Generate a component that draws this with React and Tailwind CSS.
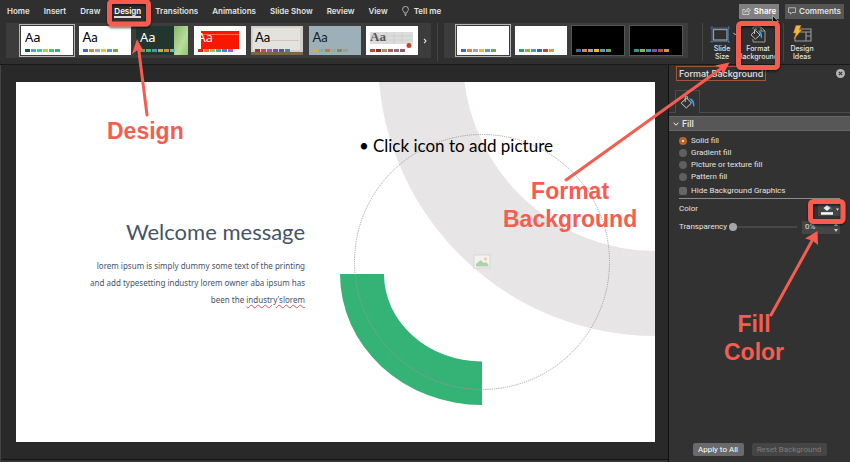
import React from "react";

const tabs = ["Home", "Insert", "Draw", "Design", "Transitions", "Animations", "Slide Show", "Review", "View"];

const office = ["#4468b8", "#de8244", "#a5a5a5", "#f2bd1d", "#5b97d0", "#6fa84c"];

const themes = [
  { name: "Current theme", swatches: ["#17564c", "#3fb0c8", "#1edb8c", "#b7d334", "#25d86c", "#33b66c"], bg: "bg-white", text: "text-black font-['Noto_Sans']", selected: true },
  { name: "Office Theme", swatches: office, bg: "bg-white", text: "text-black font-[Lato]" },
  { name: "Ion", swatches: ["#5fa040", "#45b08a", "#3c9fb8", "#c9ae38", "#d98a2f", "#6cb6b0"], bg: "bg-[#22362f]", text: "text-white font-['Noto_Sans']", art: "ion" },
  { name: "Atlas", swatches: ["#e02020", "#f07030", "#9bc04a", "#38b0a0", "#3b86d0", "#b054d8"], bg: "bg-white", text: "text-white font-['Open_Sans']", art: "atlas" },
  { name: "Gallery", swatches: ["#a82848", "#d83c78", "#a84cc0", "#6850b0", "#4a58a0", "#4f8098"], bg: "bg-[#d3d0ca]", text: "text-black font-[Lato]", art: "gallery" },
  { name: "Parcel", swatches: ["#e5a73c", "#94a5aa", "#cf7040", "#a3a688", "#86866a", "#9b9f86"], bg: "bg-[#9db0b8]", text: "text-[#16201f] font-[Lato]" },
  { name: "Wood Type", swatches: ["#c44a24", "#8c2f28", "#a39468", "#a0605c", "#8a7078", "#8c5c6c"], bg: "bg-white", text: "text-[#555] font-['Liberation_Serif'] font-bold", art: "wood" },
];

const variants = [
  { name: "Variant 1", swatches: office, bg: "bg-white", selected: true },
  { name: "Variant 2", swatches: ["#2b9a80", "#86b840", "#36a3c8", "#2868a8", "#b8482c", "#e8992c"], bg: "bg-white" },
  { name: "Variant 3", swatches: office, bg: "bg-black" },
  { name: "Variant 4", swatches: ["#2b9a80", "#86b840", "#3a94b8", "#7450b8", "#c84a2c", "#d8903c"], bg: "bg-black" },
];

function ThumbArt({ kind }) {
  return (
    <svg className="absolute inset-0 h-full w-full" viewBox="0 0 52 29" preserveAspectRatio="none" aria-hidden="true">
      {kind === "ion" && (
        <>
          <defs>
            <linearGradient id="leaf" x1="0" y1="0" x2="1" y2="1">
              <stop offset="0" stopColor="#86b86a" />
              <stop offset="0.6" stopColor="#b9dc9e" />
              <stop offset="1" stopColor="#8cc66c" />
            </linearGradient>
          </defs>
          <rect x="38" width="14" height="29" fill="url(#leaf)" />
        </>
      )}
      {kind === "atlas" && (
        <>
          <rect x="7" y="5" width="38" height="18" fill="#f81800" />
          <path d="M7 8.500H45" stroke="#fb7a68" strokeWidth="0.8" />
        </>
      )}
      {kind === "gallery" && (
        <>
          <rect x="2" y="2" width="47" height="22" fill="#e4e2dd" />
          <path d="M18 14.500H48" stroke="#c9b8b6" strokeWidth="0.7" />
          <rect y="26" width="52" height="3" fill="#7c6544" />
        </>
      )}
      {kind === "wood" && (
        <>
          <rect x="4" y="6" width="43" height="12" fill="#dcdcdc" />
          <path d="M4 10H47M4 14H47M12 6V18M20 6V18M28 6V18M36 6V18" stroke="#cbcbcb" strokeWidth="0.6" />
          <circle cx="43" cy="19.500" r="2.500" fill="#c2442a" />
        </>
      )}
    </svg>
  );
}

function Thumb({ item }) {
  return (
    <button
      type="button"
      aria-label={item.name}
      className={`relative flex h-[29px] w-[52px] shrink-0 flex-col justify-end pb-[3px] pl-[4px] ${item.bg} ${
        item.selected ? "outline outline-1 outline-offset-1 outline-[#b4b4b4]" : item.bg === "bg-black" ? "outline outline-1 outline-[#565656]" : ""
      }`}
    >
      {item.art && <ThumbArt kind={item.art} />}
      {item.text && <span className={`relative flex-1 pt-[3px] text-left text-[13px] leading-[16px] ${item.text}`}>Aa</span>}
      <span className="relative flex gap-px">
        {item.swatches.map((c, i) => (
          <i key={i} className="h-[3px] w-[5px]" style={{ backgroundColor: c }} />
        ))}
      </span>
    </button>
  );
}

function Bucket({ className }) {
  return (
    <svg className={className} viewBox="0 0 16 14" fill="none" aria-hidden="true">
      <path d="M6.500 3 11.500 8 6.300 13 1.200 8Z" stroke="#d0d0d0" strokeWidth="1" strokeLinejoin="round" />
      <path d="M5.200 7V2.200C5.200.8 7.600.8 7.600 2.200V4" stroke="#d0d0d0" strokeWidth="0.9" />
      <path d="M9 3.500C12.500 3 14.800 5.500 14.400 12 13 12 12.800 9.500 12.400 7.500Z" fill="#3b9be0" />
    </svg>
  );
}

function Ribbon() {
  return (
    <div className="flex h-[43px] items-start border-b border-[#191919] px-[6px] pt-px">
      <div className="flex h-[35px] w-[425px] shrink-0 items-center bg-[#3c3c3c] pl-[15px]">
        <div className="flex w-[397px] justify-between">
          {themes.map((t) => <Thumb key={t.name} item={t} />)}
        </div>
        <button type="button" aria-label="More themes" className="flex flex-1 justify-center">
          <svg className="h-[6px] w-[4px]" viewBox="0 0 4 6" fill="none"><path d="M1 .8 3 3 1 5.200" stroke="#e8e8e8" strokeWidth="1.100" /></svg>
        </button>
      </div>
      <div className="mx-[6px] h-[38px] w-px bg-[#454545]" />
      <div className="flex h-[35px] w-[244px] shrink-0 items-center bg-[#3c3c3c] pl-[13px]">
        <div className="flex w-[225px] justify-between">
          {variants.map((t) => <Thumb key={t.name} item={t} />)}
        </div>
      </div>
      <div className="ml-[14px] h-[38px] w-px bg-[#454545]" />
      <button type="button" className="flex w-[38px] shrink-0 flex-col items-center text-[7px] leading-[8px] font-medium">
        <span className="flex h-[22px] items-center gap-[3px] pl-[4px]">
          <svg className="h-[17px] w-[20px] shrink-0" viewBox="0 0 20 17" fill="none" aria-hidden="true">
            <path d="M2 0V17M18.500 0V17M0 2H20M0 15.500H20" stroke="#3d6d9c" strokeWidth="0.9" />
            <rect x="3.500" y="3.500" width="13.500" height="10.500" stroke="#9a9a9a" strokeWidth="1.300" />
          </svg>
          <svg className="h-[4px] w-[5px] shrink-0" viewBox="0 0 5 4" fill="none"><path d="M.5.8 2.500 3 4.500.8" stroke="#ddd" /></svg>
        </span>
        Slide<br />Size
      </button>
      <button type="button" className="flex w-[34px] shrink-0 flex-col items-center text-[7px] leading-[8px] font-medium">
        <span className="flex h-[22px] items-center">
          <svg className="h-[17px] w-[18px]" viewBox="0 0 18 17" fill="none" aria-hidden="true">
            <path d="M4 1H12L16 5V16H4V13M4 3V1M12 1V5H16" stroke="#a5a5a5" strokeWidth="0.9" />
            <path d="M6.500 4.500 11 9 6.500 13 2 8.800ZM5.500 8V3.800C5.500 2.600 7.500 2.600 7.500 3.800" stroke="#ccc" strokeWidth="0.9" />
            <path d="M9 4.500C12.500 4.500 13.500 8 13 12.500 11.600 12.500 11.400 10 11 8.500Z" fill="#3b9be0" />
          </svg>
        </span>
        Format<br />Background
      </button>
      <div className="ml-[8px] h-[38px] w-px bg-[#454545]" />
      <button type="button" className="flex w-[36px] shrink-0 flex-col items-center text-[7px] leading-[8px] font-medium">
        <span className="flex h-[22px] items-center">
          <svg className="h-[18px] w-[20px]" viewBox="0 0 20 18" fill="none" aria-hidden="true">
            <path d="M7 4H19V16H3V12M8 7H19M14 7V16M14 11H19" stroke="#9c9c9c" strokeWidth="1.100" />
            <path d="M4 .5H9L7 5H9.500L2 14 4 8H1.500Z" fill="#f6b73c" stroke="#c98516" strokeWidth="0.5" />
          </svg>
        </span>
        Design<br />Ideas
      </button>
    </div>
  );
}

function Slide() {
  return (
    <section aria-label="Slide" className="relative aspect-[639/360] w-full overflow-hidden bg-white">
      <svg className="absolute inset-0 h-full w-full" viewBox="0 0 639 360" aria-hidden="true">
        <circle cx="640" cy="-24" r="235.500" fill="none" stroke="#e7e5e6" strokeWidth="85" />
        <path d="M324 192H368A98 87.500 0 0 0 466 279.500V323A142 131 0 0 1 324 192Z" fill="#35b276" />
        <circle cx="466" cy="180" r="127.500" fill="none" stroke="#9b9b9b" strokeWidth="0.9" strokeDasharray="1.200 1" />
        <g opacity="0.8">
          <rect x="458" y="173" width="16" height="13" fill="#f7f7f5" stroke="#cfcfcf" strokeWidth="0.9" />
          <circle cx="469.500" cy="177" r="1.800" fill="#f4cf8c" />
          <path d="M460 184.500V182L464.500 178 468 181 470 180 472.500 182.500V184.500Z" fill="#a3cda0" />
        </g>
      </svg>
      <ul className="absolute top-[51px] left-[343px] font-[Lato]">
        <li className="flex gap-[4px] text-[17px] leading-[26px] whitespace-nowrap text-black"><span aria-hidden="true">•</span>Click icon to add picture</li>
      </ul>
      <h1 className="absolute top-[134px] right-[350px] font-[Lato] text-[22px] leading-[32px] whitespace-nowrap text-[#44546a]">Welcome message</h1>
      <p className="absolute top-[175px] right-[350px] text-right font-['Noto_Sans'] text-[8px] leading-[17px] whitespace-nowrap text-[#44546a]">
        lorem ipsum is simply dummy some text of the printing<br />
        and add typesetting industry lorem owner aba ipsum has<br />
        been the <span className="underline decoration-[#e0525c] decoration-wavy decoration-1 underline-offset-1">industry'slorem</span>
      </p>
    </section>
  );
}

const fills = ["Solid fill", "Gradient fill", "Picture or texture fill", "Pattern fill"];

function FormatPane() {
  return (
    <aside className="flex w-[182px] shrink-0 flex-col border-l border-[#111] bg-[#323232] font-[Roboto,sans-serif] text-[8px] leading-[10px]">
      <div className="flex items-center justify-between pt-px pr-[5px] pl-[7px]">
        <h2 className="border border-[#a2573a] px-[2px] font-[Inter,sans-serif] text-[9px] leading-[13px] font-medium">Format Background</h2>
        <button type="button" aria-label="Close pane">
          <svg className="h-[9px] w-[9px]" viewBox="0 0 9 9"><circle cx="4.500" cy="4.500" r="4.500" fill="#b5b5b5" /><path d="M2.800 2.800 6.200 6.200M6.200 2.800 2.800 6.200" stroke="#323232" strokeWidth="1.100" /></svg>
        </button>
      </div>
      <div className="mt-[9px] flex items-end">
        <div className="w-[6px] border-b border-[#4b4b4b]" />
        <button type="button" aria-label="Fill" className="flex h-[23px] w-[25px] items-center justify-center border border-b-0 border-[#4b4b4b]">
          <Bucket className="h-[14px] w-[16px]" />
        </button>
        <div className="flex-1 border-b border-[#4b4b4b]" />
      </div>
      <button type="button" className="mt-[3px] flex h-[15px] items-center gap-[3px] border-y border-[#666] bg-[#575757] pl-[4px] text-[9px] font-medium">
        <svg className="h-[4px] w-[6px]" viewBox="0 0 6 4" fill="none"><path d="M.7.700 3 3.200 5.300.700" stroke="#eee" /></svg>
        Fill
      </button>
      <fieldset className="mt-[4px] px-[10px]">
        {fills.map((f, i) => (
          <label key={f} className="flex h-[12px] items-center gap-[4px]">
            <input
              type="radio"
              name="fill"
              defaultChecked={i === 0}
              className="h-[8px] w-[8px] appearance-none rounded-full bg-[#5f5f5f] checked:border-[3px] checked:border-[#bb6428] checked:bg-white"
            />
            {f}
          </label>
        ))}
      </fieldset>
      <div className="px-[10px]">
        <label className="flex h-[16px] items-center gap-[4px] border-b border-[#8c8c8c]">
          <input type="checkbox" className="h-[8px] w-[8px] appearance-none rounded-[2px] bg-[#666] checked:bg-[#bb6428]" />
          Hide Background Graphics
        </label>
        <div className="mt-[2px] flex h-[16px] items-center justify-between">
          Color
          <button type="button" aria-label="Fill color" className="flex h-[13px] w-[22px] items-center gap-[3px] bg-[#454545] pl-[3px]">
            <svg className="h-[11px] w-[12px] shrink-0" viewBox="0 0 12 11"><path d="M6 1 9.500 4 6 7 2.500 4Z" fill="#e8edf2" /><path d="M8 2C10 2 10.500 4 10.200 6Z" fill="#3b9be0" /><rect y="8.200" width="12" height="2.500" fill="#fff" /></svg>
            <svg className="h-[3px] w-[3px] shrink-0" viewBox="0 0 4 3"><path d="M0 0H4L2 3Z" fill="#ddd" /></svg>
          </button>
        </div>
        <div className="mt-[3px] flex h-[14px] items-center">
          <label htmlFor="transparency" className="w-[50px]">Transparency</label>
          <input
            id="transparency"
            type="range"
            defaultValue="0"
            className="h-[2px] w-[68px] appearance-none bg-[#474747] [&::-webkit-slider-thumb]:h-[8px] [&::-webkit-slider-thumb]:w-[8px] [&::-webkit-slider-thumb]:appearance-none [&::-webkit-slider-thumb]:rounded-full [&::-webkit-slider-thumb]:bg-[#a6a6a6]"
          />
          <span className="ml-auto flex h-[13px] w-[38px] items-center bg-[#454545] pr-[2px] pl-[3px]">
            <input type="text" aria-label="Transparency value" defaultValue="0%" className="w-0 flex-1 bg-transparent leading-[10px]" />
            <span className="flex flex-col gap-[3px]">
              <button type="button" aria-label="Increase"><svg className="h-[3px] w-[4px]" viewBox="0 0 4 3"><path d="M0 3H4L2 0Z" fill="#ccc" /></svg></button>
              <button type="button" aria-label="Decrease"><svg className="h-[3px] w-[4px]" viewBox="0 0 4 3"><path d="M0 0H4L2 3Z" fill="#ccc" /></svg></button>
            </span>
          </span>
        </div>
      </div>
      <div className="mt-auto flex justify-center gap-[8px] pb-[6px]">
        <button type="button" className="h-[13px] w-[51px] rounded-[2px] bg-[#6a6a6a] text-white">Apply to All</button>
        <button type="button" disabled className="h-[13px] w-[75px] rounded-[2px] bg-[#454545] text-[#7c7c7c]">Reset Background</button>
      </div>
    </aside>
  );
}

function Callouts() {
  const label = "absolute text-center font-['Liberation_Sans'] text-[23px] leading-[28px] font-bold text-[#f65d50]";
  return (
    <div className="pointer-events-none absolute inset-0 overflow-hidden">
      <svg className="absolute top-0 left-0 h-[462px] w-[850px]" viewBox="0 0 850 462" fill="none" aria-hidden="true">
        <defs>
          <filter id="shade" x="-20%" y="-20%" width="140%" height="150%">
            <feDropShadow dx="0" dy="1.500" stdDeviation="1.200" floodColor="#000" floodOpacity="0.6" />
          </filter>
        </defs>
        <g stroke="#f65d50" strokeWidth="5" filter="url(#shade)">
          <rect x="109.500" y="1.500" width="39" height="22.500" rx="3" />
          <rect x="738.500" y="23.500" width="39" height="44" rx="3" />
          <rect x="810.500" y="201.500" width="32.500" height="20" rx="3" />
        </g>
        <g stroke="#f65d50" strokeWidth="3" strokeLinecap="round">
          <path d="M147 115 138.500 48" />
          <path d="M566 180 722 68" />
          <path d="M771 315 813 239" />
        </g>
        <g fill="#f65d50">
          <path d="M137 39 144 52 138.500 49.500 132 54Z" />
          <path d="M729.500 62.500 722.500 76 721.500 68.500 715 65.500Z" />
          <path d="M817.500 231 818 245 812.500 240.500 805 238.500Z" />
        </g>
      </svg>
      <p className={`${label} top-[117px] left-[107px]`}>Design</p>
      <p className={`${label} top-[177px] left-[503px]`}>Format<br />Background</p>
      <p className={`${label} top-[310px] left-[724px]`}>Fill<br />Color</p>
    </div>
  );
}

export default function App() {
  return (
    <div className="relative flex min-h-screen flex-col bg-[#2f2f2f] font-[Inter,sans-serif] text-[#e2e2e2]">
      <header className="flex h-[22px] items-center justify-between pr-[6px] pl-[7px] text-[8px] font-semibold">
        <nav className="flex items-center gap-[14px] leading-[12px]">
          {tabs.map((t) => (
            <a key={t} href="#" className={t === "Design" ? "relative text-white after:absolute after:inset-x-0 after:-bottom-px after:h-[2px] after:bg-[#ddd]" : ""}>{t}</a>
          ))}
          <a href="#" className="flex items-center gap-[5px]">
            <svg className="h-[10px] w-[7px]" viewBox="0 0 7 10" fill="none" stroke="#cfcfcf" strokeWidth="0.8" aria-hidden="true"><path d="M2.300 7C2.300 5.500.6 5 .6 3.300A2.900 2.900 0 0 1 6.400 3.300C6.400 5 4.700 5.500 4.700 7ZM2.400 8.300H4.600M2.900 9.500H4.100" /></svg>
            Tell me
          </a>
        </nav>
        <div className="flex gap-[6px]">
          <button type="button" className="relative flex h-[15px] w-[40px] items-center justify-center gap-[3px] bg-[#808080] text-white">
            <svg className="h-[8px] w-[9px]" viewBox="0 0 9 8" fill="none" stroke="#ddd" strokeWidth="0.8" aria-hidden="true"><path d="M3 2.500H.8V7.500H7V5.500M2.800 5.500C3 3.500 4.300 2.700 6 2.700V1L8.500 3.200 6 5.300V3.900C4.600 3.900 3.600 4.300 2.800 5.500Z" /></svg>
            Share
            <svg className="absolute top-[11px] right-0 h-[11px] w-[7px]" viewBox="0 0 7 11" aria-hidden="true"><path d="M.5.500V8.500L2.300 7 3.500 10 4.900 9.400 3.700 6.600H6.300Z" fill="#000" stroke="#ddd" strokeWidth="0.6" /></svg>
          </button>
          <button type="button" className="flex h-[15px] w-[59px] items-center justify-center gap-[3px] bg-[#565656]">
            <svg className="h-[8px] w-[8px]" viewBox="0 0 8 8" fill="none" stroke="#ccc" strokeWidth="0.8" aria-hidden="true"><path d="M.5.800H7.500V5.500H4L2.500 7.200V5.500H.5Z" /></svg>
            Comments
          </button>
        </div>
      </header>
      <Ribbon />
      <main className="flex flex-1">
        <div className="flex min-w-0 flex-1 flex-col justify-between border-l border-[#444] bg-[#292929] pt-[17px]">
          <div className="pr-[13px] pl-[15px]"><Slide /></div>
          <div className="h-[3px] border-t border-[#151515] bg-[#333]" />
        </div>
        <FormatPane />
      </main>
      <Callouts />
    </div>
  );
}
